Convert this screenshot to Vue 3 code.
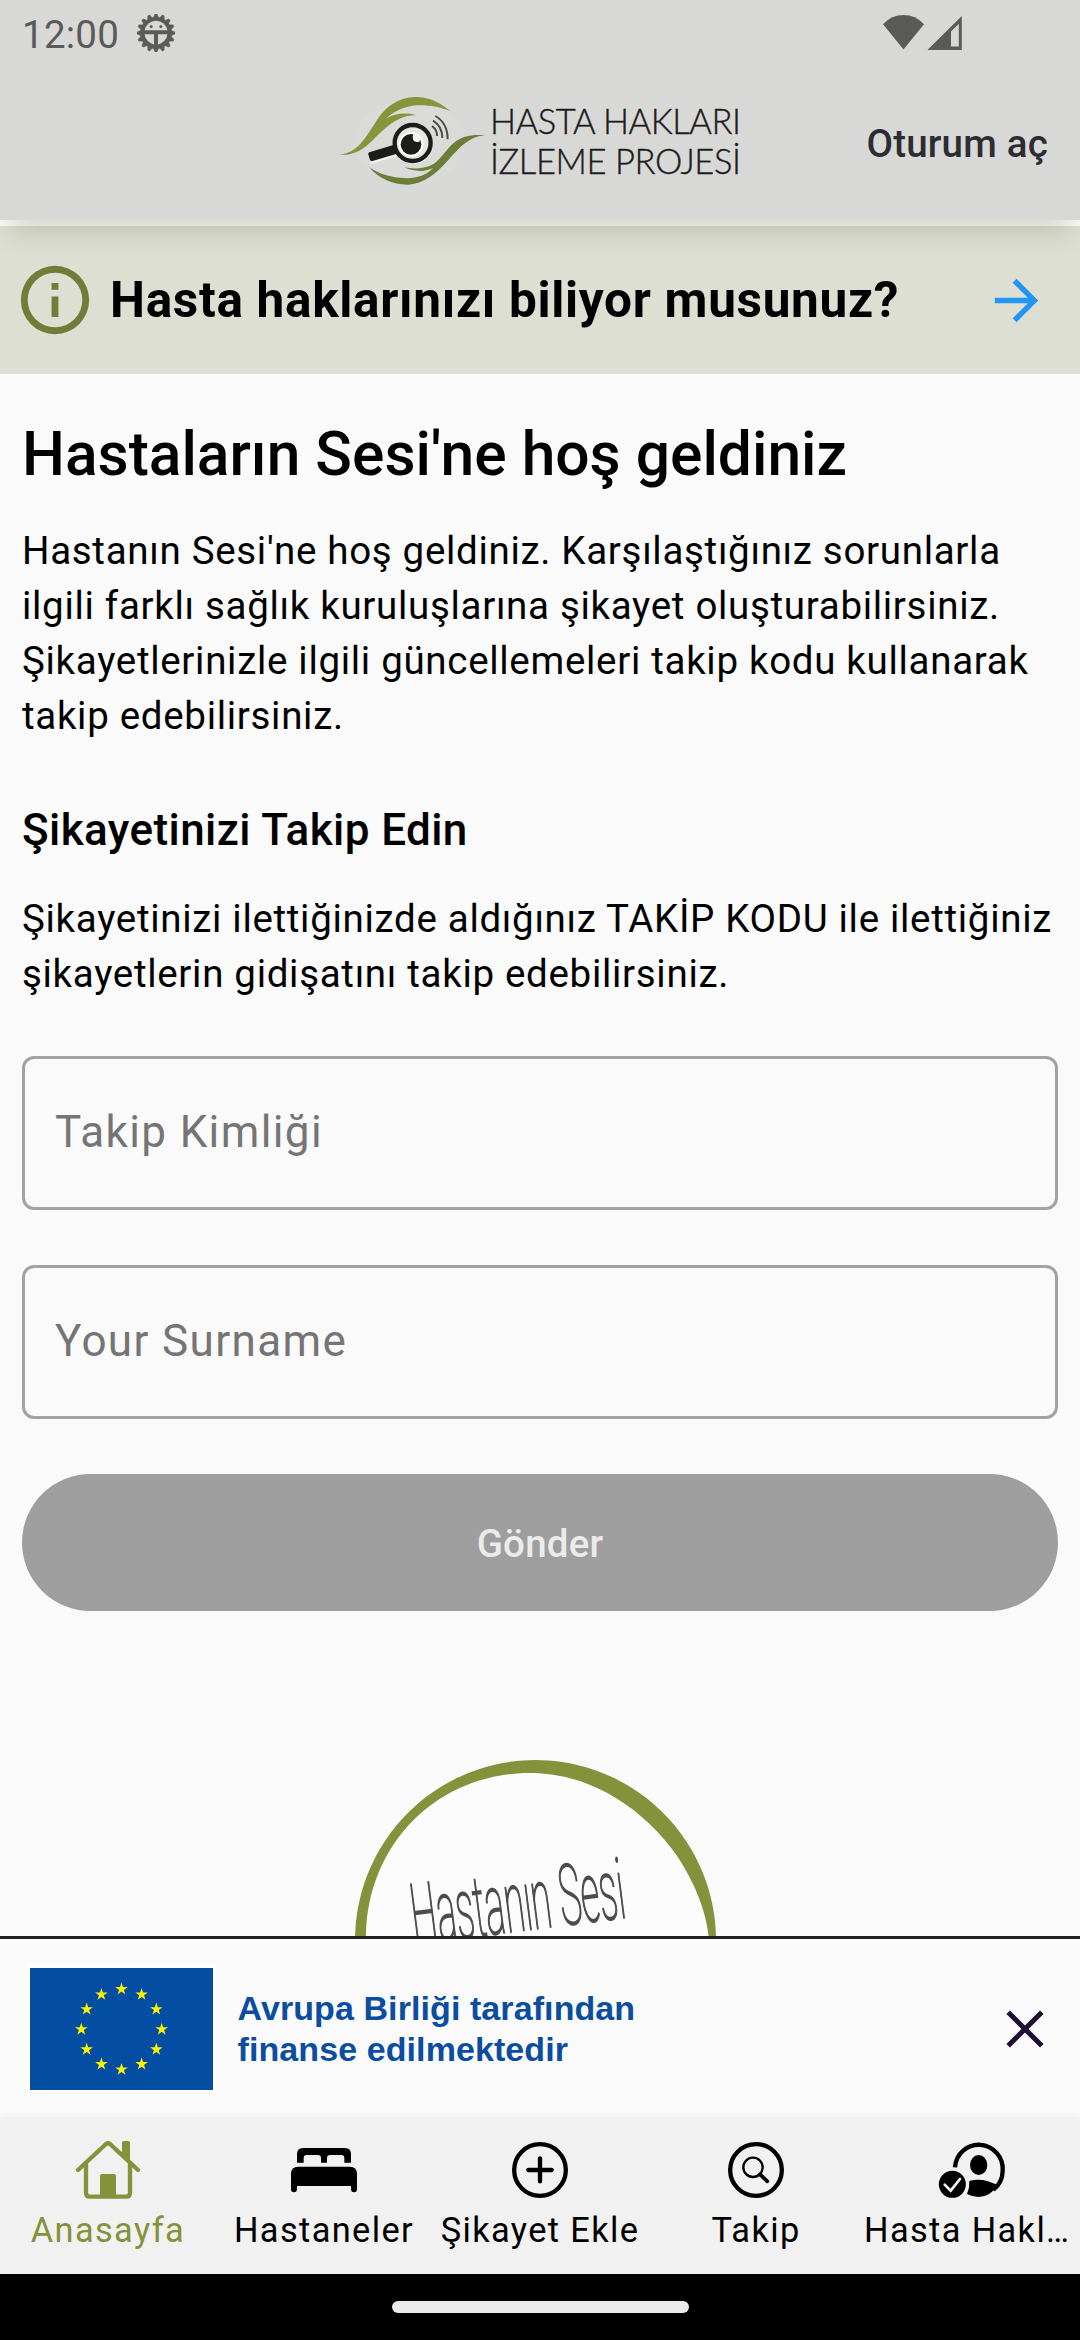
<script setup>
import { ref } from 'vue'

const trackingId = ref('')
const surname = ref('')

const tabs = [
  { id: 'home', label: 'Anasayfa', box: '216 102 216 216' },
  { id: 'bed', label: 'Hastaneler', box: '864 102 216 216' },
  { id: 'add', label: 'Şikayet Ekle', box: '222 102 216 216' },
  { id: 'track', label: 'Takip', box: '870 102 216 216' },
  { id: 'rights', label: 'Hasta Hakları', box: '408 522 216 216' },
]
const active = 'home'

// Twelve upright five-pointed stars on a circle
const star = (cx, cy, r) =>
  Array.from({ length: 10 }, (_, i) => {
    const a = (Math.PI / 5) * i - Math.PI / 2
    const q = i % 2 ? r * 0.382 : r
    return `${(cx + q * Math.cos(a)).toFixed(2)},${(cy + q * Math.sin(a)).toFixed(2)}`
  }).join(' ')
const stars = Array.from({ length: 12 }, (_, i) => {
  const a = (Math.PI / 6) * i
  return star(121.5 + 40.2 * Math.sin(a), 2029.3 - 40.2 * Math.cos(a), 6.6)
})

// Brush-like ring: inner radius varies with the angle (degrees, radius)
const ring = [[-20, 177], [0, 173.5], [25, 166], [50, 163], [90, 167.5], [135, 171.5], [190, 169]]
const polar = (deg, r) => {
  const a = (deg * Math.PI) / 180
  return `${(535.5 + r * Math.cos(a)).toFixed(2)} ${(1940.6 - r * Math.sin(a)).toFixed(2)}`
}
const slope = (i) => {
  const a = ring[Math.max(0, i - 1)]
  const b = ring[Math.min(ring.length - 1, i + 1)]
  return (b[1] - a[1]) / (b[0] - a[0])
}
// Hermite interpolation keeps the inner edge smooth
const radiusAt = (d) => {
  let i = 0
  while (i < ring.length - 2 && d > ring[i + 1][0]) i++
  const [a, ra] = ring[i]
  const [b, rb] = ring[i + 1]
  const h = b - a
  const t = (d - a) / h
  return (
    (2 * t ** 3 - 3 * t ** 2 + 1) * ra +
    (t ** 3 - 2 * t ** 2 + t) * h * slope(i) +
    (3 * t ** 2 - 2 * t ** 3) * rb +
    (t ** 3 - t ** 2) * h * slope(i + 1)
  )
}
const outer = []
const inner = []
for (let d = -8; d <= 188; d += 2) {
  outer.push(polar(d, 180.5))
  inner.unshift(polar(d, radiusAt(d)))
}
const ringPath = 'M' + outer.join('L') + 'L' + inner.join('L') + 'Z'

// Gear outline of the status bar icon
const gear = Array.from({ length: 64 }, (_, i) => {
  const a = (Math.PI / 32) * (i - 0.5)
  const r = i % 4 < 2 ? 19 : 15.8
  return `${(19 + r * Math.sin(a)).toFixed(2)},${(19 - r * Math.cos(a)).toFixed(2)}`
}).join(' ')
</script>

<template>
  <div class="screen">
    <header class="top">
      <div class="status">
        <span class="time">12:00</span>
        <svg class="gear" width="38" height="38" viewBox="0 0 38 38">
          <polygon :points="gear" fill="#5a5a59" stroke="#5a5a59" stroke-width=".6" stroke-linejoin="round" />
          <path d="M7.6 16.2a11.6 11.6 0 0 1 22.8 0z" fill="#d8d8d6" />
          <path d="M7.6 20.2h9.4v10.2a11.6 11.6 0 0 1-9.4-10.2zM30.4 20.2h-9.4v10.2a11.6 11.6 0 0 0 9.4-10.2z" fill="#d8d8d6" />
          <circle cx="14.2" cy="12.4" r="1.5" fill="#5a5a59" />
          <circle cx="23.8" cy="12.4" r="1.5" fill="#5a5a59" />
        </svg>
        <svg class="signals" width="80" height="38" viewBox="883 14 80 38">
          <path d="M883 24.2Q891.500 15 903.500 15Q915.500 15 924 24.200L903.500 49.500Z" fill="#5a5a59" />
          <path fill-rule="evenodd" d="M927.400 50L961.800 16V50ZM951 31.500V46.500H958.800V24Z" fill="#5a5a59" />
        </svg>
      </div>
      <div class="bar">
        <svg class="brand" width="412" height="110" viewBox="334 85 412 110">
          <g transform="translate(330 85) scale(.33333)">
            <ellipse cx="240" cy="172" rx="165" ry="128" fill="#dcdddd" opacity=".55" />
            <path d="M28 209C80 205 102 165 135 115C170 55 215 36 262 36C305 37 335 58 363 79C330 66 300 60 262 61C222 64 190 80 168 101C195 85 225 82 258 90C215 92 190 108 160 135C125 165 95 215 28 209Z" fill="#84953b" />
            <path d="M465 151C430 148 400 150 370 175C345 197 330 228 305 240C280 252 250 252 222 247C255 262 290 260 310 248C285 275 250 283 210 278C170 275 140 262 117 246C145 280 190 300 235 299C285 295 320 265 355 225C395 180 420 155 465 151Z" fill="#6c7d37" />
            <circle cx="251" cy="179" r="58" fill="#f4f5f4" />
            <path d="M120 234L200 211" stroke="#f4f5f4" stroke-width="5" />
            <circle cx="248" cy="174" r="54" fill="#e6e6e5" stroke="#1c1c1a" stroke-width="13" />
            <path d="M118 202Q114 204 115 208L120 225Q122 229 127 228L200 206L190 180Z" fill="#1c1c1a" />
            <circle cx="243" cy="178" r="37" fill="#fff" />
            <circle cx="243" cy="178" r="31" fill="#1c1c1a" />
            <path d="M250 146L273 158L268 170Q256 174 250 166Q246 156 250 146Z" fill="#f4f4f4" />
            <path d="M316 93Q353 114 353 163M309 107Q337 124 337 159M306 123Q322 135 321 153" fill="none" stroke="#4a4a4a" stroke-width="6" />
          </g>
          <g class="brand-text">
            <text x="490" y="134" textLength="251">HASTA HAKLARI</text>
            <text x="490" y="174" textLength="251">İZLEME PROJESİ</text>
          </g>
        </svg>
        <a class="login">Oturum aç</a>
      </div>
    </header>

    <section class="notice">
      <svg width="82" height="82" viewBox="0 0 24 24">
        <path fill="#6f7d38" d="M11 7h2v2h-2zm0 4h2v6h-2zM12 2a10 10 0 1 0 0 20 10 10 0 0 0 0-20zm0 18a8 8 0 1 1 0-16 8 8 0 0 1 0 16z" />
      </svg>
      <strong>Hasta haklarınızı biliyor musunuz?</strong>
      <svg class="go" width="65" height="65" viewBox="0 0 24 24">
        <path fill="#2196f3" d="M12 4l-1.410 1.410L16.170 11H4v2h12.170l-5.580 5.590L12 20l8-8z" />
      </svg>
    </section>

    <main class="content">
      <h1>Hastaların Sesi'ne hoş geldiniz</h1>
      <p>
        Hastanın Sesi'ne hoş geldiniz. Karşılaştığınız sorunlarla<br />
        ilgili farklı sağlık kuruluşlarına şikayet oluşturabilirsiniz.<br />
        Şikayetlerinizle ilgili güncellemeleri takip kodu kullanarak<br />
        takip edebilirsiniz.
      </p>
      <h2>Şikayetinizi Takip Edin</h2>
      <p>
        Şikayetinizi ilettiğinizde aldığınız TAKİP KODU ile ilettiğiniz<br />
        şikayetlerin gidişatını takip edebilirsiniz.
      </p>
      <form class="form" @submit.prevent>
        <input v-model="trackingId" placeholder="Takip Kimliği" />
        <input v-model="surname" placeholder="Your Surname" />
        <button type="submit">Gönder</button>
      </form>
      <svg class="emblem" width="370" height="176" viewBox="355 1760 370 176">
        <circle cx="535.5" cy="1940.6" r="172" fill="#fcfcfd" />
        <path :d="ringPath" fill="#83923b" />
        <text transform="translate(414.600 1944) rotate(-7.200) scale(.433 1)" class="emblem-text">Hastanın Sesi</text>
      </svg>
    </main>

    <aside class="funding">
      <svg width="189" height="128" viewBox="27 1965 189 128">
        <rect x="27" y="1965" width="189" height="128" fill="#fff" />
        <rect x="30" y="1968" width="183" height="122" fill="#034ea2" />
        <polygon v-for="(s, i) in stars" :key="i" :points="s" fill="#fff200" />
      </svg>
      <p>Avrupa Birliği tarafından<br />finanse edilmektedir</p>
      <svg class="close" width="38" height="38" viewBox="0 0 38 38">
        <path d="M2.200 2.200L35.800 35.800M35.800 2.200L2.200 35.800" stroke="#1d1033" stroke-width="5" />
      </svg>
    </aside>

    <nav class="tabs">
      <a v-for="t in tabs" :key="t.id" class="tab" :class="{ active: t.id === active }">
        <svg width="72" height="72" :viewBox="t.box" fill="none" stroke="currentColor">
          <g v-if="t.id === 'home'" stroke-width="13" stroke-linecap="round" stroke-linejoin="round">
            <path d="M234 210L318 132Q324 127 330 132L414 210" />
            <path d="M258 192V278Q258 290 270 290H378Q390 290 390 278V192" />
            <path d="M366 166V128Q366 123 371 123H385Q390 123 390 128V188Z" fill="currentColor" stroke="none" />
            <path d="M300 290V228Q300 222 306 222H342Q348 222 348 228V290Z" fill="currentColor" stroke="none" />
          </g>
          <g v-else-if="t.id === 'bed'" fill="currentColor" stroke="none">
            <path d="M891 188V162Q891 144 909 144H1035Q1053 144 1053 162V188H1033V174Q1033 165 1024 165H990Q981 165 981 174V188H963V174Q963 165 954 165H920Q911 165 911 174V188Z" />
            <path d="M873 268V222Q873 200 895 200H1049Q1071 200 1071 222V268Q1071 277 1062 277Q1053 277 1053 268V258H891V268Q891 277 882 277Q873 277 873 268Z" />
          </g>
          <g v-else-if="t.id === 'add'" stroke-width="13" stroke-linecap="round">
            <circle cx="330" cy="210" r="77.5" />
            <path d="M295 210H365M330 175V244" />
          </g>
          <g v-else-if="t.id === 'track'" stroke-linecap="round">
            <circle cx="978" cy="210" r="77.5" stroke-width="13" />
            <circle cx="969" cy="202" r="29" stroke-width="7" />
            <path d="M990 223L1012 244" stroke-width="11" />
          </g>
          <g v-else>
            <path d="M465 622A71 72 0 0 1 608 632A71 72 0 0 1 580 689" stroke-width="13" />
            <ellipse cx="536" cy="615" rx="26" ry="30" fill="currentColor" stroke="none" />
            <path d="M508 663Q548 651 594 676Q570 711 536 711Q518 711 501 702Q509 684 508 663Z" fill="currentColor" stroke="none" />
            <circle cx="457" cy="673" r="40.500" fill="currentColor" stroke="none" />
            <path d="M434 674L452 692L480 657" stroke="#f1f1f1" stroke-width="8" stroke-linecap="round" />
          </g>
        </svg>
        <span>{{ t.label }}</span>
      </a>
    </nav>

    <div class="gesture"><i></i></div>
  </div>
</template>

<style>
body {
  margin: 0;
  background: #fafafa;
}
</style>

<style scoped>
.screen {
  width: 1080px;
  height: 2340px;
  display: flex;
  flex-direction: column;
  overflow: hidden;
  background: #fafafa;
  color: #000;
  font-family: Roboto, sans-serif;
}
svg {
  display: block;
  flex: none;
}
.top {
  position: relative;
  z-index: 1;
  flex: none;
  box-sizing: border-box;
  height: 220px;
  margin-bottom: 6px;
  background: #d8d8d6;
  box-shadow: 0 20px 26px -10px rgba(50, 60, 0, 0.2);
}
.status {
  display: flex;
  align-items: center;
  height: 66px;
  padding: 0 117px 0 22px;
}
.time {
  width: 114.500px;
  padding-top: 3px;
  font-size: 38.500px;
  letter-spacing: 0.240px;
  color: #5a5a59;
}
.signals {
  margin-left: auto;
}
.bar {
  display: grid;
  grid-template-columns: 1fr auto 1fr;
  align-items: center;
  height: 148px;
}
.brand {
  grid-column: 2;
}
.brand-text {
  font-family: Lato, sans-serif;
  font-weight: 300;
  font-size: 34.500px;
  fill: #1c1c1c;
  stroke: #1c1c1c;
  stroke-width: 0.400px;
}
.login {
  justify-self: end;
  padding: 7px 32px 0 0;
  font-size: 38.500px;
  line-height: 44px;
  font-weight: 500;
  letter-spacing: 0.200px;
  color: #2d2c33;
}
.notice {
  flex: none;
  display: flex;
  align-items: center;
  height: 148px;
  padding: 0 31px 0 14px;
  background: #dddfd3;
}
.notice strong {
  margin-left: 14px;
  font-size: 49.500px;
  line-height: 60px;
  font-weight: 700;
  letter-spacing: 0.690px;
}
.go {
  margin-left: auto;
}
.content {
  flex: none;
  box-sizing: border-box;
  height: 1562px;
  padding: 45px 22px 0;
  overflow: hidden;
}
h1,
h2,
p {
  margin: 0;
}
h1 {
  font-size: 60.500px;
  line-height: 72px;
  font-weight: 500;
}
.content p {
  margin-top: 32px;
  font-size: 38.500px;
  line-height: 55.125px;
  letter-spacing: 0.690px;
  white-space: nowrap;
}
h2 {
  margin-top: 61px;
  font-size: 44px;
  line-height: 50px;
  font-weight: 500;
  letter-spacing: 0.410px;
}
.content h2 + p {
  margin-top: 36px;
}
.form {
  display: flex;
  flex-direction: column;
  gap: 55px;
  margin-top: 55px;
}
.form input {
  box-sizing: border-box;
  height: 154px;
  padding: 0 30px 2px;
  border: 3px solid #a2a2a2;
  border-radius: 12px;
  outline: 0;
  background: transparent;
  font: 400 44px Roboto, sans-serif;
  letter-spacing: 1.375px;
}
.form input::placeholder {
  color: #757575;
  opacity: 1;
}
.form button {
  height: 137px;
  padding: 2px 0 0;
  border: 0;
  border-radius: 69px;
  background: #9e9e9e;
  color: #ebebeb;
  font: 500 38.500px Roboto, sans-serif;
  letter-spacing: 0.200px;
}
.emblem {
  margin: 149px auto 0;
}
.emblem-text {
  font-family: Roboto, sans-serif;
  font-weight: 100;
  font-size: 84px;
  fill: #4c4c4e;
  stroke: #4c4c4e;
  stroke-width: 2px;
}
.funding {
  flex: none;
  box-sizing: border-box;
  height: 181px;
  display: flex;
  align-items: center;
  padding: 2px 36px 0 27px;
  border-top: 3px solid #222;
  background: #fafafa;
}
.funding p {
  margin-left: 21.500px;
  font: 700 34px/41.300px "Liberation Sans", sans-serif;
  letter-spacing: 0.090px;
  color: #0b4ea0;
}
.close {
  margin-left: auto;
}
.tabs {
  position: relative;
  flex: none;
  box-sizing: border-box;
  height: 157px;
  padding-top: 17px;
  display: grid;
  grid-template-columns: repeat(5, 216px);
  background: #f1f1f1;
  box-shadow: 0 -1px 6px rgba(0, 0, 0, 0.04);
}
.tab {
  min-width: 0;
  display: flex;
  flex-direction: column;
  align-items: center;
  color: #000;
}
.tab.active {
  color: #83923b;
}
.tab span {
  max-width: 216px;
  margin-top: 4px;
  font-size: 34.375px;
  line-height: 41px;
  letter-spacing: 1.375px;
  white-space: nowrap;
  overflow: hidden;
  text-overflow: ellipsis;
}
.gesture {
  flex: none;
  display: flex;
  justify-content: center;
  height: 66px;
  padding-top: 27px;
  box-sizing: border-box;
  background: #000;
}
.gesture i {
  width: 297px;
  height: 12px;
  border-radius: 6px;
  background: #ebebeb;
}
</style>
